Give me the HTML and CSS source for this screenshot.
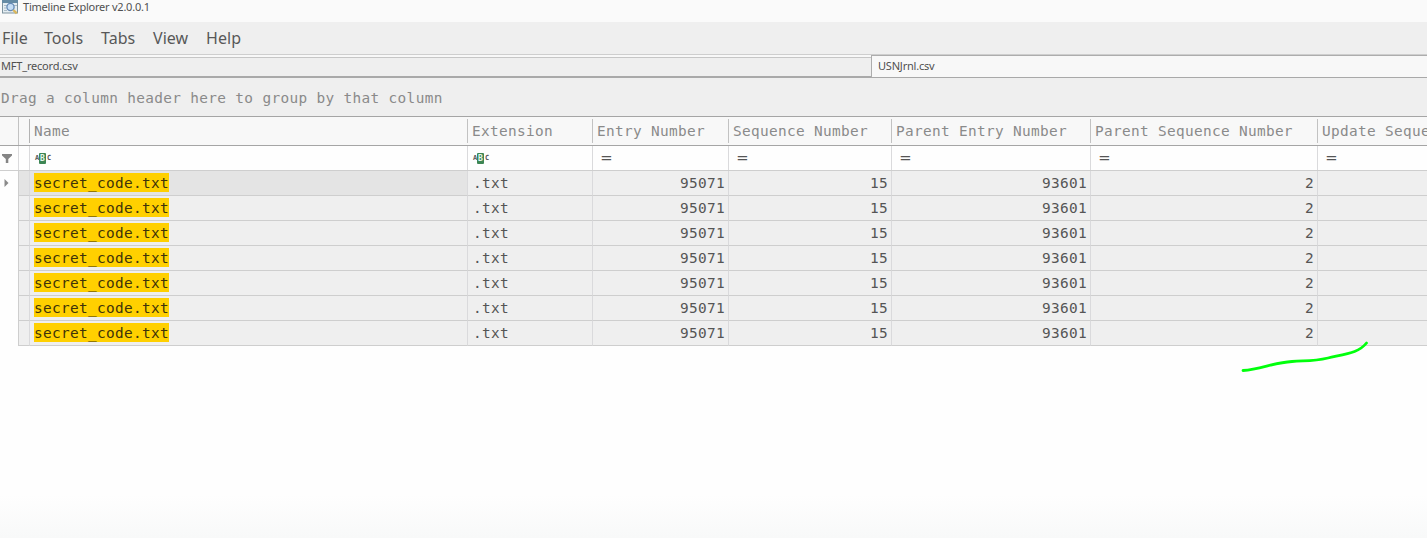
FILE: index.html
```html
<!DOCTYPE html>
<html lang="en">
<head>
<meta charset="utf-8">
<title>Timeline Explorer v2.0.0.1</title>
<link rel="stylesheet" href="styles.css">
</head>
<body>
<div class="app">
  <header class="titlebar">
    <svg class="app-icon" width="17" height="15" viewBox="0 0 17 15">
      <rect x="0.5" y="0.5" width="15" height="12.5" fill="#e4edf2" stroke="#7e939f"/>
      <rect x="0" y="0" width="16" height="3" fill="#658ba4"/>
      <path d="M2 5.5h3M2 8h2M2 10.5h3M12 5.5h3" stroke="#a9bac4"/>
      <circle cx="8.500" cy="7" r="3.600" fill="#c6def5" stroke="#6489b5" stroke-width="1.300"/>
      <path d="M11.3 10l3.4 3.4" stroke="#d9b65c" stroke-width="2.400"/>
    </svg>
    <span class="title">Timeline Explorer v2.0.0.1</span>
  </header>
  <nav class="menu"><span class="m-file">File</span><span class="m-tools">Tools</span><span class="m-tabs">Tabs</span><span class="m-view">View</span><span>Help</span></nav>
  <div class="tabs">
    <div class="tab"><span class="t-mft">MFT_record.csv</span></div>
    <div class="tab active"><span class="t-usn">USNJrnl.csv</span></div>
  </div>
  <div class="group-panel">Drag a column header here to group by that column</div>
  <main class="grid">
    <div class="row head"><i></i><i></i><span>Name</span><span>Extension</span><span>Entry Number</span><span>Sequence Number</span><span>Parent Entry Number</span><span>Parent Sequence Number</span><span>Update Sequence</span></div>
    <div class="row filter">
      <i class="mark"><svg width="10" height="9" viewBox="0 0 10 9"><path d="M0 0h10v1.500L6.300 5v4H3.800V5L0 1.500z" fill="#858585"/></svg></i><i></i>
      <span class="abc"><small>A</small><b>B</b><small>C</small></span>
      <span class="abc"><small>A</small><b>B</b><small>C</small></span>
      <span><em>=</em></span><span><em>=</em></span><span><em>=</em></span><span><em>=</em></span><span><em>=</em></span>
    </div>
    <div class="row data focused"><i class="mark"><svg width="5" height="8" viewBox="0 0 5 8"><path d="M0.500 0L4.500 4L0.500 8z" fill="#8a8a8a"/></svg></i><i></i><span><mark>secret_code.txt</mark></span><span>.txt</span><span>95071</span><span>15</span><span>93601</span><span>2</span><span></span></div>
    <div class="row data"><i></i><i></i><span><mark>secret_code.txt</mark></span><span>.txt</span><span>95071</span><span>15</span><span>93601</span><span>2</span><span></span></div>
    <div class="row data"><i></i><i></i><span><mark>secret_code.txt</mark></span><span>.txt</span><span>95071</span><span>15</span><span>93601</span><span>2</span><span></span></div>
    <div class="row data"><i></i><i></i><span><mark>secret_code.txt</mark></span><span>.txt</span><span>95071</span><span>15</span><span>93601</span><span>2</span><span></span></div>
    <div class="row data"><i></i><i></i><span><mark>secret_code.txt</mark></span><span>.txt</span><span>95071</span><span>15</span><span>93601</span><span>2</span><span></span></div>
    <div class="row data"><i></i><i></i><span><mark>secret_code.txt</mark></span><span>.txt</span><span>95071</span><span>15</span><span>93601</span><span>2</span><span></span></div>
    <div class="row data"><i></i><i></i><span><mark>secret_code.txt</mark></span><span>.txt</span><span>95071</span><span>15</span><span>93601</span><span>2</span><span></span></div>
  </main>
  <svg class="pen" width="130" height="34" viewBox="0 0 130 34"><path d="M3 30.500C21 29 34 22.500 52 21.500C66 20.500 73 21.500 88 18C108 13.500 119 12.500 126.500 3" fill="none" stroke="#00ff0c" stroke-width="2.800" stroke-linecap="round"/></svg>
</div>
</body>
</html>
```
FILE: styles.css
```css
* { box-sizing: border-box; }
body { margin: 0; background: #fefefe; overflow: hidden; }
.app {
  position: relative;
  width: 1427px;
  height: 538px;
  overflow: hidden;
  display: flex;
  flex-direction: column;
  font-family: "DejaVu Sans Mono", monospace;
  font-size: 14.4px;
  letter-spacing: 0.33px;
  color: #555;
  background: linear-gradient(#fefefe 495px, #f8f9f9 538px);
}
.titlebar {
  height: 22px;
  display: flex;
  align-items: flex-start;
  background: #fafafa;
  font: 11px/14px "Noto Sans", sans-serif;
  letter-spacing: -0.23px;
  color: #505050;
}
.app-icon { margin-left: 2px; flex: none; }
.title { margin-left: 4px; }
.menu {
  height: 33px;
  display: flex;
  padding-left: 2px;
  background: #efefef;
  border-bottom: 1px solid #cecece;
  font: 16px/32px "Noto Sans", sans-serif;
  letter-spacing: 0.05px;
  color: #585858;
}
.m-file { width: 42px; }
.m-tools { width: 57px; }
.m-tabs { width: 52px; }
.m-view { width: 53px; }
.tabs {
  height: 23px;
  display: flex;
  align-items: flex-end;
  background: #f8f8f8;
  font: 11px/18px "Noto Sans", sans-serif;
  letter-spacing: -0.2px;
  color: #505050;
}
.tab {
  width: 871px;
  height: 21px;
  padding-left: 1px;
  background: #efefef;
  border-top: 1px solid #c6c6c6;
  border-bottom: 2px solid #a9a9a9;
}
.tab .t-mft { display: block; margin-top: -1px; }
.tab.active {
  flex: 1;
  height: 23px;
  padding-left: 6px;
  line-height: 20px;
  background: #f8f8f8;
  border-top: 1px solid #adadad;
  border-left: 1px solid #adadad;
  border-bottom: 1px solid #a9a9a9;
}
.group-panel {
  height: 38px;
  padding-left: 1px;
  line-height: 40px;
  letter-spacing: 0.35px;
  color: #8a8a8a;
  background: #efefef;
}
.row {
  display: grid;
  grid-template-columns: 19px 11px 438px 125px 136px 163px 199px 227px 109px;
  height: 25px;
  line-height: 24px;
  white-space: nowrap;
}
.row > * { border-right: 1px solid #dadadc; overflow: hidden; }
.row > :last-child { border-right: 0; }
.row > span { padding-left: 5px; }
.head {
  height: 30px;
  line-height: 24px;
  padding: 2px 0;
  color: #8a8a8a;
  background: #f8f8f8;
  border-top: 1px solid #a5a5a5;
  border-bottom: 1px solid #a5a5a5;
}
.head > * { border-right-color: #c2c2c2; }
.head > span { padding-left: 4px; }
.head > :first-child { margin: -2px 0; }
.head > :nth-child(2) { border-right-color: #b3b3b3; }
.filter { background: #fefefe; border-bottom: 1px solid #cecece; }
.filter > span { padding-left: 8px; }
.filter em {
  display: inline-block;
  font-style: normal;
  letter-spacing: 0;
  transform: scaleX(1.25);
  transform-origin: left;
}
.mark { display: flex; align-items: center; padding-left: 2px; }
.focused .mark { padding: 0 0 1px 4px; }
.filter > .abc {
  display: flex;
  align-items: center;
  padding-left: 5px;
  font-size: 8px;
  letter-spacing: 0;
  font-weight: bold;
  line-height: 11px;
}
.abc small { font-size: 7px; width: 4px; }
.abc b {
  width: 7px;
  height: 11px;
  text-align: center;
  margin-right: 1px;
  color: #e8f5ec;
  background: #3d8654;
  border-radius: 1px;
}
.data > *:not(:first-child) { background: #efefef; border-bottom: 1px solid #cecece; }
.data > :first-child { border-right-color: #cecece; }
.data > :nth-child(n+5) { text-align: right; padding-right: 3px; }
.focused > :nth-child(2), .focused > :nth-child(3) { background: #e4e4e4; }
mark {
  display: inline-block;
  height: 19px;
  line-height: 20px;
  margin: 2px 0 0 -1px;
  vertical-align: top;
  background: #ffd000;
  color: #40330a;
}
.pen { position: absolute; left: 1240px; top: 340px; }
```
